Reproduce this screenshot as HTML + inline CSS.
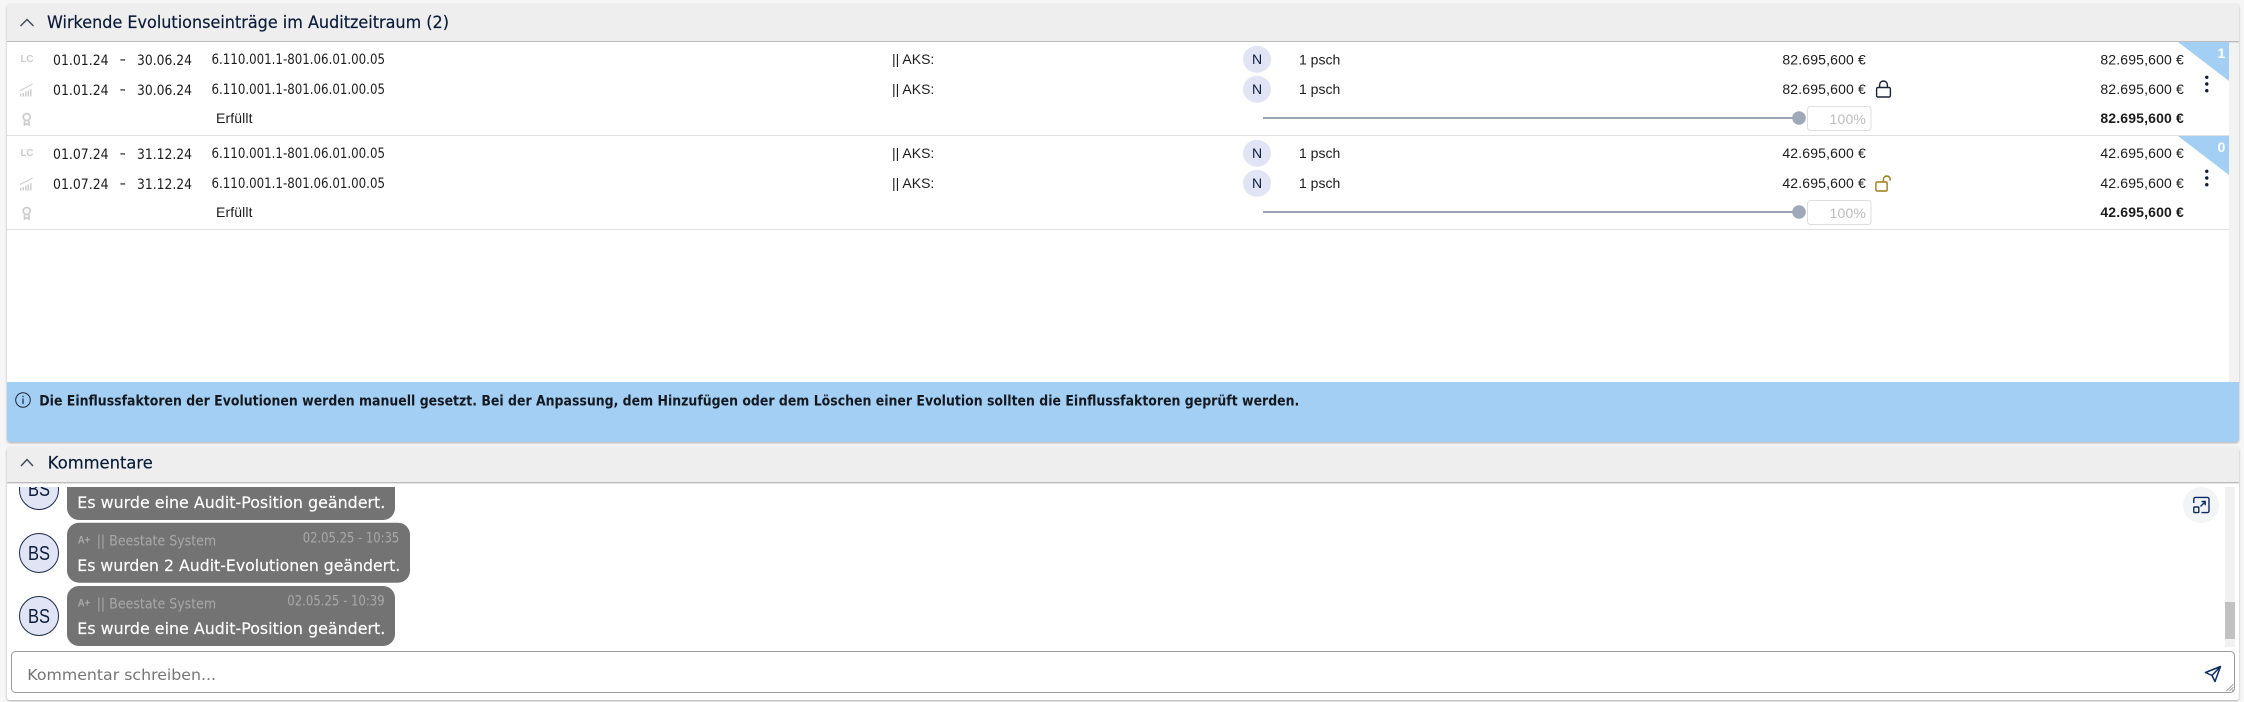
<!DOCTYPE html>
<html lang="de">
<head>
<meta charset="utf-8">
<title>Evolutionen</title>
<style>
html,body{margin:0;padding:0;width:2244px;height:702px;overflow:hidden;background:#f6f6f6}
svg{display:block}
.p{font-family:"DejaVu Sans","Liberation Sans",sans-serif;fill:#1c1c1c}
.l{font-family:"Liberation Sans",Arial,sans-serif;font-size:14px;fill:#1c1c1c}
.r{text-anchor:end;letter-spacing:.16px}
.b{font-weight:700}
.h{font-size:17px;fill:#0c1b3a;stroke:#0c1b3a;stroke-width:.2px}
.d{font-size:14px}
.m{font-size:16px;fill:#fff;stroke:#fff;stroke-width:.15px}
.g{font-size:14px;fill:#a9a9a9}
</style>
</head>
<body>
<svg width="2244" height="702" viewBox="0 0 2244 702" xmlns="http://www.w3.org/2000/svg">
<defs>
<filter id="s" x="-1%" y="-5%" width="102%" height="110%"><feDropShadow dx="0" dy="1" stdDeviation="1" flood-color="#000" flood-opacity=".3"/></filter>
<clipPath id="chat"><rect x="7" y="487" width="2232" height="165"/></clipPath>
<g id="lc"><text x="20.5" y="62" font-family="Liberation Sans,sans-serif" font-size="10" font-weight="700" fill="#cccccc" textLength="13">LC</text></g>
<g id="chart" fill="#cfcfcf">
<rect x="20" y="94" width="1.5" height="2.5"/><rect x="22.5" y="93" width="1.5" height="3.5"/><rect x="25" y="91.5" width="1.5" height="5"/><rect x="27.5" y="90.5" width="1.5" height="6"/><rect x="30" y="89" width="1.5" height="7.5"/>
<path d="M20 90.5 27 87 32.5 84" fill="none" stroke="#cfcfcf" stroke-width="1"/></g>
<g id="medal" fill="none" stroke="#cccccc" stroke-width="1.7"><circle cx="26.7" cy="117" r="3.5"/><path d="M24.5 121v4l2.2-1.2 2.2 1.2v-4"/></g>
<g id="kebab" fill="#0c1b3a"><circle cx="2206.8" cy="77.3" r="1.7"/><circle cx="2206.8" cy="84" r="1.7"/><circle cx="2206.8" cy="90.7" r="1.7"/></g>
<g id="thumb"><rect x="1263" y="117" width="532" height="2" fill="#9aa3b2"/><circle cx="1799" cy="118" r="6.8" fill="#a0a9b8"/><rect x="1807.5" y="106.5" width="63.5" height="24" rx="3" fill="#fff" stroke="#dedede"/><text x="1866" y="124" class="l r" style="fill:#bcbcbc">100%</text></g>
</defs>

<!-- top panel -->
<rect x="7" y="4" width="2232" height="438" rx="3" fill="#f2f2f2" filter="url(#s)"/>
<rect x="7" y="4" width="2232" height="37" fill="#eeeeee"/>
<rect x="7" y="41" width="2232" height="1.4" fill="#bdbdbd"/>
<rect x="7" y="42" width="2222" height="340" fill="#fff"/>
<path d="M20.5 26 27 19.5 33.5 26" fill="none" stroke="#3c4656" stroke-width="1.4"/>
<text x="47" y="28" class="p h" textLength="402" lengthAdjust="spacingAndGlyphs">Wirkende Evolutionseinträge im Auditzeitraum (2)</text>

<!-- row group 1 -->
<use href="#lc"/><use href="#chart"/><use href="#medal"/>
<text x="53" y="65" class="p d" textLength="55.6" lengthAdjust="spacingAndGlyphs">01.01.24</text>
<text x="119.5" y="64" class="p d" textLength="6.5" lengthAdjust="spacingAndGlyphs">-</text>
<text x="137" y="65" class="p d" textLength="55" lengthAdjust="spacingAndGlyphs">30.06.24</text>
<text x="211.5" y="64" class="p d" textLength="173.5" lengthAdjust="spacingAndGlyphs">6.110.001.1-801.06.01.00.05</text>
<text x="53" y="95" class="p d" textLength="55.6" lengthAdjust="spacingAndGlyphs">01.01.24</text>
<text x="119.5" y="94" class="p d" textLength="6.5" lengthAdjust="spacingAndGlyphs">-</text>
<text x="137" y="95" class="p d" textLength="55" lengthAdjust="spacingAndGlyphs">30.06.24</text>
<text x="211.5" y="94" class="p d" textLength="173.5" lengthAdjust="spacingAndGlyphs">6.110.001.1-801.06.01.00.05</text>
<text x="216" y="123" class="l" style="letter-spacing:.12px">Erfüllt</text>
<text x="892" y="64" class="l">|| AKS:</text>
<text x="892" y="94" class="l">|| AKS:</text>
<ellipse cx="1257" cy="59.3" rx="14" ry="13.5" fill="#e0e4f5"/>
<ellipse cx="1257" cy="89.3" rx="14" ry="13.5" fill="#e0e4f5"/>
<text x="1257" y="64" class="l" text-anchor="middle" style="fill:#0c1b3a">N</text>
<text x="1257" y="94" class="l" text-anchor="middle" style="fill:#0c1b3a">N</text>
<text x="1299" y="64.5" class="l">1 psch</text>
<text x="1299" y="94" class="l">1 psch</text>
<text x="1866" y="64.5" class="l r">82.695,600 €</text>
<text x="1866" y="94" class="l r">82.695,600 €</text>
<text x="2184" y="64.5" class="l r">82.695,600 €</text>
<text x="2184" y="94" class="l r">82.695,600 €</text>
<text x="2184" y="123" class="l r b">82.695,600 €</text>
<path d="M1878 87.5h11a1.4 1.4 0 0 1 1.4 1.4v6.7a1.4 1.4 0 0 1-1.4 1.4h-11a1.4 1.4 0 0 1-1.4-1.4v-6.7a1.4 1.4 0 0 1 1.4-1.4zM1879.6 87.5v-2.6a3.9 3.9 0 0 1 7.8 0v2.6" fill="none" stroke="#1c2438" stroke-width="1.4"/>
<use href="#thumb"/>
<path d="M2178 42H2229V81Z" fill="#a4cff4"/>
<text x="2225.5" y="58" class="l b r" style="fill:#fff">1</text>
<use href="#kebab"/>
<rect x="7" y="135" width="2222" height="1" fill="#e0e0e0"/>

<!-- row group 2 -->
<g transform="translate(0 94)"><use href="#lc"/><use href="#chart"/><use href="#medal"/></g>
<text x="53" y="159" class="p d" textLength="55.6" lengthAdjust="spacingAndGlyphs">01.07.24</text>
<text x="119.5" y="158" class="p d" textLength="6.5" lengthAdjust="spacingAndGlyphs">-</text>
<text x="137" y="159" class="p d" textLength="55" lengthAdjust="spacingAndGlyphs">31.12.24</text>
<text x="211.5" y="158" class="p d" textLength="173.5" lengthAdjust="spacingAndGlyphs">6.110.001.1-801.06.01.00.05</text>
<text x="53" y="189" class="p d" textLength="55.6" lengthAdjust="spacingAndGlyphs">01.07.24</text>
<text x="119.5" y="188" class="p d" textLength="6.5" lengthAdjust="spacingAndGlyphs">-</text>
<text x="137" y="189" class="p d" textLength="55" lengthAdjust="spacingAndGlyphs">31.12.24</text>
<text x="211.5" y="188" class="p d" textLength="173.5" lengthAdjust="spacingAndGlyphs">6.110.001.1-801.06.01.00.05</text>
<text x="216" y="217" class="l" style="letter-spacing:.12px">Erfüllt</text>
<text x="892" y="158" class="l">|| AKS:</text>
<text x="892" y="188" class="l">|| AKS:</text>
<ellipse cx="1257" cy="153.3" rx="14" ry="13.5" fill="#e0e4f5"/>
<ellipse cx="1257" cy="183.3" rx="14" ry="13.5" fill="#e0e4f5"/>
<text x="1257" y="158" class="l" text-anchor="middle" style="fill:#0c1b3a">N</text>
<text x="1257" y="188" class="l" text-anchor="middle" style="fill:#0c1b3a">N</text>
<text x="1299" y="158" class="l">1 psch</text>
<text x="1299" y="188" class="l">1 psch</text>
<text x="1866" y="158" class="l r">42.695,600 €</text>
<text x="1866" y="188" class="l r">42.695,600 €</text>
<text x="2184" y="158" class="l r">42.695,600 €</text>
<text x="2184" y="188" class="l r">42.695,600 €</text>
<text x="2184" y="217" class="l r b">42.695,600 €</text>
<path d="M1877 182h9a1.1 1.1 0 0 1 1.1 1.1v6.8a1.1 1.1 0 0 1-1.1 1.1h-9a1.1 1.1 0 0 1-1.1-1.1v-6.8a1.1 1.1 0 0 1 1.1-1.1zM1883.4 182v-2.6a3.4 3.4 0 0 1 6.8 0v1.2" fill="none" stroke="#a07c12" stroke-width="1.4"/>
<use href="#thumb" y="94"/>
<path d="M2178 136H2229V175Z" fill="#a4cff4"/>
<text x="2225.5" y="152" class="l b r" style="fill:#fff">0</text>
<use href="#kebab" y="94"/>
<rect x="7" y="229" width="2222" height="1" fill="#e0e0e0"/>

<!-- banner -->
<path d="M7 382H2239V439a3 3 0 0 1-3 3H10a3 3 0 0 1-3-3Z" fill="#a4cff4"/>
<circle cx="23" cy="400" r="7.3" fill="none" stroke="#1c2438" stroke-width="1"/>
<rect x="22.4" y="398.5" width="1.2" height="5.5" fill="#1c2438"/><rect x="22.4" y="395.8" width="1.2" height="1.4" fill="#1c2438"/>
<text x="39.3" y="405.5" class="p b" style="font-size:14px;fill:#14181f" textLength="1260" lengthAdjust="spacingAndGlyphs">Die Einflussfaktoren der Evolutionen werden manuell gesetzt. Bei der Anpassung, dem Hinzufügen oder dem Löschen einer Evolution sollten die Einflussfaktoren geprüft werden.</text>

<!-- comments panel -->
<rect x="7" y="447" width="2232" height="253" rx="3" fill="#fff" filter="url(#s)"/>
<path d="M7 450a3 3 0 0 1 3-3H2236a3 3 0 0 1 3 3V482H7Z" fill="#eeeeee"/>
<rect x="7" y="482" width="2232" height="1.4" fill="#bdbdbd"/>
<path d="M21 466 27 459.5 33 466" fill="none" stroke="#3c4656" stroke-width="1.4"/>
<text x="47.8" y="468.5" class="p h" textLength="105" lengthAdjust="spacingAndGlyphs">Kommentare</text>

<g clip-path="url(#chat)">
<circle cx="39" cy="490" r="19.5" fill="#e0e4f5" stroke="#1c2a4a"/>
<text x="28" y="496" class="l" style="font-size:20px;fill:#0c1b3a" textLength="22" lengthAdjust="spacingAndGlyphs">BS</text>
<rect x="67" y="460" width="328" height="60" rx="12" fill="#737373"/>
<text x="77.3" y="508" class="p m" textLength="308" lengthAdjust="spacingAndGlyphs">Es wurde eine Audit-Position geändert.</text>
</g>

<circle cx="39" cy="553" r="19.5" fill="#e0e4f5" stroke="#1c2a4a"/>
<text x="28" y="560" class="l" style="font-size:20px;fill:#0c1b3a" textLength="22" lengthAdjust="spacingAndGlyphs">BS</text>
<rect x="67" y="522.7" width="343" height="60" rx="12" fill="#737373"/>
<text x="77.7" y="543.3" class="l b" style="font-size:11px;fill:#a9a9a9" textLength="12.5" lengthAdjust="spacingAndGlyphs">A+</text>
<text x="96.7" y="545.7" class="p g" textLength="119.5" lengthAdjust="spacingAndGlyphs">|| Beestate System</text>
<text x="302.7" y="542.3" class="p g" textLength="96.6" lengthAdjust="spacingAndGlyphs">02.05.25 - 10:35</text>
<text x="77.3" y="571" class="p m" textLength="323" lengthAdjust="spacingAndGlyphs">Es wurden 2 Audit-Evolutionen geändert.</text>

<circle cx="39" cy="616" r="19.5" fill="#e0e4f5" stroke="#1c2a4a"/>
<text x="28" y="623" class="l" style="font-size:20px;fill:#0c1b3a" textLength="22" lengthAdjust="spacingAndGlyphs">BS</text>
<rect x="67" y="586" width="328" height="60" rx="12" fill="#737373"/>
<text x="77.7" y="606.6" class="l b" style="font-size:11px;fill:#a9a9a9" textLength="12.5" lengthAdjust="spacingAndGlyphs">A+</text>
<text x="96.7" y="608.7" class="p g" textLength="119.5" lengthAdjust="spacingAndGlyphs">|| Beestate System</text>
<text x="287.3" y="605.7" class="p g" textLength="97.4" lengthAdjust="spacingAndGlyphs">02.05.25 - 10:39</text>
<text x="77.3" y="634" class="p m" textLength="308" lengthAdjust="spacingAndGlyphs">Es wurde eine Audit-Position geändert.</text>

<!-- scrollbar and expand -->
<rect x="2225" y="487" width="10" height="160" fill="#f1f1f1"/>
<rect x="2225" y="602" width="10" height="37" fill="#c1c1c1"/>
<circle cx="2201" cy="505" r="18" fill="#f3f4f6"/>
<path d="M2193.8 503v-4a1.6 1.6 0 0 1 1.6-1.6h12a1.6 1.6 0 0 1 1.6 1.6v12a1.6 1.6 0 0 1-1.6 1.6h-6" fill="none" stroke="#0c2a66" stroke-width="1.4"/>
<rect x="2193.8" y="507" width="5" height="5.6" rx=".8" fill="none" stroke="#0c2a66" stroke-width="1.4"/>
<path d="M2200.5 506.5 2205 502M2201.5 501.5H2205.2V505.2" fill="none" stroke="#0c2a66" stroke-width="1.4"/>

<!-- input -->
<rect x="11.5" y="651.5" width="2223" height="41" rx="4" fill="#fff" stroke="#9b9b9b"/>
<text x="27.3" y="680" class="p" style="font-size:15.5px;fill:#757575" textLength="188.7" lengthAdjust="spacingAndGlyphs">Kommentar schreiben...</text>
<path d="M2220.5 666.5 2205.5 672.5 2212 675.5 2215 681.5ZM2212 675.5 2220.5 666.5" fill="none" stroke="#0c2a66" stroke-width="1.5" stroke-linejoin="round"/>
<path d="M2226.5 691 2233.5 684M2229.5 691 2233.5 687M2232 691 2233.5 689.5" stroke="#8a8a8a" stroke-width=".8"/>
</svg>
</body>
</html>
